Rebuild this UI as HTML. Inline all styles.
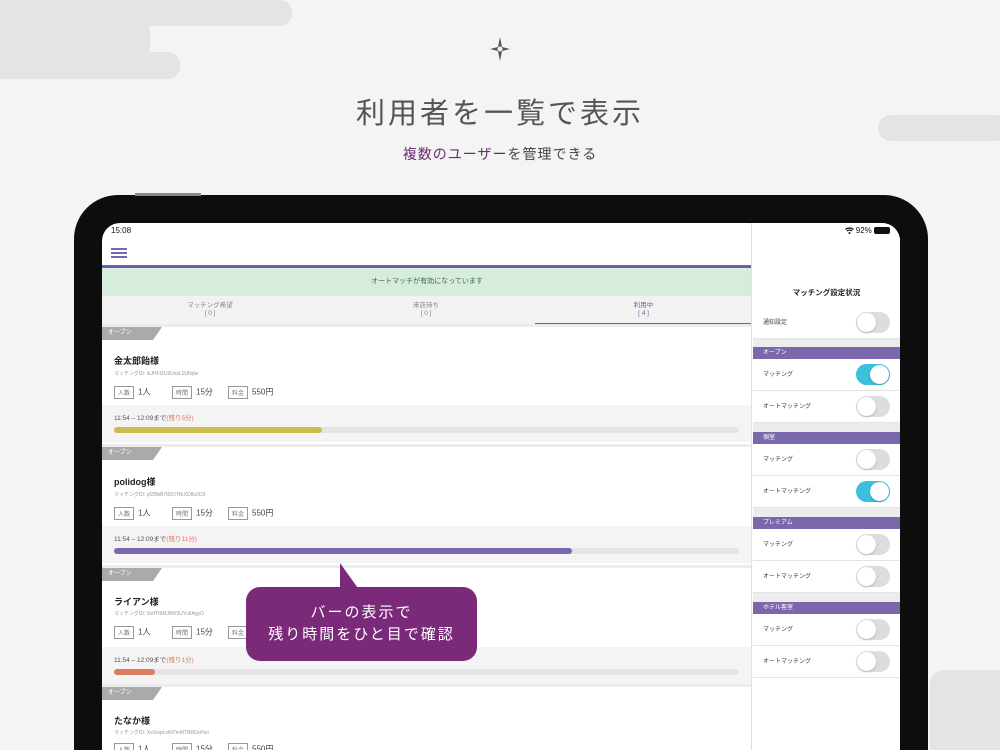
<!DOCTYPE html>
<html style="width:1000px;height:750px;overflow:hidden"><head><meta charset="utf-8"><style>
*{margin:0;padding:0;box-sizing:border-box}
body{width:1000px;height:750px;overflow:hidden;background:#f4f4f4;font-family:"Liberation Sans","Noto Sans CJK JP",sans-serif;position:relative;color:#333}
.cl{position:absolute;background:#e4e4e4}
.abs{position:absolute}
.tab{position:absolute;left:74px;top:195px;width:854px;height:555px;background:#0d0d0d;border-radius:44px 44px 0 0}
.scr{position:absolute;left:102px;top:223px;width:798px;height:527px;background:#fff;border-radius:18px 18px 0 0;overflow:hidden}
.left{position:absolute;left:0;top:0;width:650px;height:527px;border-right:1px solid #e0e0e0;overflow:hidden}
.tag{position:absolute;left:0;width:60px;height:13px;background:#aaa;clip-path:polygon(0 0,100% 0,85% 100%,0 100%);color:#fff;font-size:6px;line-height:13px;padding-left:6px}
.card{position:absolute;left:0;width:650px;height:120px;border-top:3px solid #ececec}
.nm{position:absolute;left:12px;font-size:9px;font-weight:bold;color:#222}
.id{position:absolute;left:12px;font-size:5px;color:#999}
.chip{position:absolute;font-size:8px;color:#444}
.chip b{display:inline-block;border:1px solid #999;font-weight:normal;font-size:6px;color:#777;padding:1px 3px;margin-right:4px;vertical-align:middle}
.barw{position:absolute;left:0;width:650px;height:37px;background:#f4f4f4}
.barw .t{position:absolute;left:12px;top:7px;font-size:6.5px;color:#555}
.barw .t span{color:#e07a5f}
.track{position:absolute;left:12px;top:22px;width:625px;height:6px;background:#e4e4e4;border-radius:3px}
.fill{height:6px;border-radius:3px}
.right{position:absolute;left:651px;top:0;width:147px;height:527px;background:#fff;overflow:hidden}
.row{position:absolute;left:0;width:147px;height:32px;border-bottom:1px solid #e3e3e3;font-size:6px;color:#444;padding-left:10px;line-height:32px}
.tg{position:absolute;right:10px;top:5px;width:34px;height:21px;border-radius:11px;background:#ddd}
.tg::after{content:"";position:absolute;left:1px;top:1px;width:19px;height:19px;border-radius:50%;background:#fff;box-shadow:0 1px 2px rgba(0,0,0,.2)}
.tg.on{background:#3bbfdc}.tg.on::after{left:14px}
.hd{position:absolute;left:0;width:147px;height:12px;background:#7b68ac;color:#fff;font-size:6px;line-height:12px;padding-left:10px}
.gap{position:absolute;left:0;width:147px;background:#ececec}
</style></head><body>
<div class="cl" style="left:0;top:0;width:292px;height:26px;border-radius:0 12px 12px 0"></div>
<div class="cl" style="left:0;top:20px;width:150px;height:40px;border-radius:0 12px 12px 0"></div>
<div class="cl" style="left:0;top:52px;width:180px;height:27px;border-radius:0 12px 12px 0"></div>
<div class="cl" style="left:878px;top:115px;width:130px;height:26px;border-radius:13px"></div>
<div class="cl" style="left:930px;top:670px;width:70px;height:80px;border-radius:14px 0 0 0"></div>
<svg class="abs" style="left:488px;top:37px" width="24" height="24" viewBox="0 0 24 24"><path d="M12 0 L14 10 L22 12 L14 14 L12 24 L10 14 L2 12 L10 10Z" fill="#555"/><circle cx="12" cy="12" r="2.5" fill="#f4f4f4"/></svg>
<div class="abs" style="left:0;width:1000px;top:90px;text-align:center;font-size:29px;letter-spacing:3px;color:#555">利用者を一覧で表示</div>
<div class="abs" style="left:0;width:1000px;top:144px;text-align:center;font-size:14px;color:#444;letter-spacing:1px"><span style="color:#6b2a6f">複数のユーザー</span>を管理できる</div>
<div class="tab"></div>
<div class="abs" style="left:135px;top:193px;width:66px;height:3px;background:#888"></div>
<div class="scr">
 <div class="left">
  <div class="abs" style="left:9px;top:3px;font-size:8px;color:#111">15:08</div>
  <div class="abs" style="left:9px;top:25px;width:16px;height:2px;background:#7b68ac;box-shadow:0 4px 0 #7b68ac,0 8px 0 #7b68ac"></div>
  <div class="abs" style="left:0;top:42px;width:650px;height:3px;background:#6e5ea8"></div>
  <div class="abs" style="left:0;top:45px;width:650px;height:28px;background:#d6ecdd;text-align:center;font-size:7px;line-height:28px;color:#3d6a4a">オートマッチが有効になっています</div>
  <div class="abs" style="left:0;top:73px;width:650px;height:30px;background:#f2f2f2;border-bottom:1px solid #ddd"></div>
  <div class="abs" style="left:0;top:79px;width:216px;text-align:center;font-size:6.5px;color:#888;line-height:8px">マッチング希望<br>[ 0 ]</div>
  <div class="abs" style="left:216px;top:79px;width:216px;text-align:center;font-size:6.5px;color:#888;line-height:8px">来店待ち<br>[ 0 ]</div>
  <div class="abs" style="left:433px;top:79px;width:217px;text-align:center;font-size:6.5px;color:#6e5ea8;line-height:8px">利用中<br>[ 4 ]</div>
  <div class="abs" style="left:433px;top:100px;width:217px;height:3px;background:#6e5ea8"></div>

  <div class="card" style="top:101px"><div class="tag" style="top:0">オープン</div>
   <div class="nm" style="top:27px">金太郎飴様</div><div class="id" style="top:43px">マッチングID: ikJHFIZU9UxsL0Ufiqlw</div>
   <div class="chip" style="left:12px;top:59px"><b>人数</b>1人</div><div class="chip" style="left:70px;top:59px"><b>時間</b>15分</div><div class="chip" style="left:126px;top:59px"><b>料金</b>550円</div>
   <div class="barw" style="top:78px"><div class="t">11:54 – 12:09まで<span>(残り5分)</span></div><div class="track"><div class="fill" style="width:208px;background:#cdbb4c"></div></div></div></div>

  <div class="card" style="top:221px"><div class="tag" style="top:0">オープン</div>
   <div class="nm" style="top:28px">polidog様</div><div class="id" style="top:44px">マッチングID: pfZBbB7t0D7HEXD8c0O3</div>
   <div class="chip" style="left:12px;top:60px"><b>人数</b>1人</div><div class="chip" style="left:70px;top:60px"><b>時間</b>15分</div><div class="chip" style="left:126px;top:60px"><b>料金</b>550円</div>
   <div class="barw" style="top:79px"><div class="t">11:54 – 12:09まで<span>(残り11分)</span></div><div class="track"><div class="fill" style="width:458px;background:#7b68ac"></div></div></div></div>

  <div class="card" style="top:342px"><div class="tag" style="top:0">オープン</div>
   <div class="nm" style="top:27px">ライアン様</div><div class="id" style="top:42px">マッチングID: 9xrfTt9MJ8W2UYu6AgyO</div>
   <div class="chip" style="left:12px;top:58px"><b>人数</b>1人</div><div class="chip" style="left:70px;top:58px"><b>時間</b>15分</div><div class="chip" style="left:126px;top:58px"><b>料金</b>550円</div>
   <div class="barw" style="top:79px"><div class="t">11:54 – 12:09まで<span>(残り1分)</span></div><div class="track"><div class="fill" style="width:41px;background:#dc7b5e"></div></div></div></div>

  <div class="card" style="top:461px;height:66px"><div class="tag" style="top:0">オープン</div>
   <div class="nm" style="top:27px">たなか様</div><div class="id" style="top:42px">マッチングID: XeSwpLvtN7mMTBRDcPeo</div>
   <div class="chip" style="left:12px;top:56px"><b>人数</b>1人</div><div class="chip" style="left:70px;top:56px"><b>時間</b>15分</div><div class="chip" style="left:126px;top:56px"><b>料金</b>550円</div></div>
 </div>
 <div class="right">
  <div class="abs" style="right:10px;top:3px;font-size:8px;color:#111"><svg width="9" height="7" viewBox="0 0 9 7" style="vertical-align:middle"><path d="M0.5 2.5 A6 6 0 0 1 8.5 2.5 M2 4 A4 4 0 0 1 7 4" stroke="#111" stroke-width="1.2" fill="none"/><circle cx="4.5" cy="6" r="1" fill="#111"/></svg> 92% <span style="display:inline-block;width:16px;height:7px;background:#111;border-radius:2px;vertical-align:middle"></span></div>
  <div class="abs" style="left:0;width:147px;top:64px;text-align:center;font-size:7.5px;font-weight:bold;color:#222">マッチング設定状況</div>
  <div class="row" style="top:84px">通知設定<div class="tg"></div></div>
  <div class="gap" style="top:116px;height:8px"></div>
  <div class="hd" style="top:124px">オープン</div>
  <div class="row" style="top:136px">マッチング<div class="tg on"></div></div>
  <div class="row" style="top:168px">オートマッチング<div class="tg"></div></div>
  <div class="gap" style="top:200px;height:9px"></div>
  <div class="hd" style="top:209px">個室</div>
  <div class="row" style="top:221px">マッチング<div class="tg"></div></div>
  <div class="row" style="top:253px">オートマッチング<div class="tg on"></div></div>
  <div class="gap" style="top:285px;height:9px"></div>
  <div class="hd" style="top:294px">プレミアム</div>
  <div class="row" style="top:306px">マッチング<div class="tg"></div></div>
  <div class="row" style="top:338px">オートマッチング<div class="tg"></div></div>
  <div class="gap" style="top:370px;height:9px"></div>
  <div class="hd" style="top:379px">ホテル客室</div>
  <div class="row" style="top:391px">マッチング<div class="tg"></div></div>
  <div class="row" style="top:423px">オートマッチング<div class="tg"></div></div>
 </div>
</div>
<svg class="abs" style="left:338px;top:563px" width="24" height="28"><path d="M2 0 L2 28 L22 28Z" fill="#7b2a7a"/></svg>
<div class="abs" style="left:246px;top:587px;width:231px;height:74px;background:#7b2a7a;border-radius:14px;color:#fff;text-align:center;font-size:15px;line-height:22px;padding-top:15px;letter-spacing:2px">バーの表示で<br>残り時間をひと目で確認</div>
</body></html>
